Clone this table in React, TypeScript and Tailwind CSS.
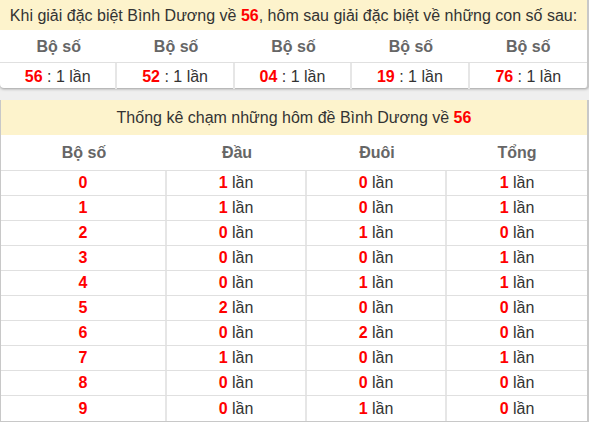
import React from "react";

const top = ["56", "52", "04", "19", "76"];
const rows: [string, string, string, string][] = [
  ["0", "1", "0", "1"],
  ["1", "1", "0", "1"],
  ["2", "0", "1", "0"],
  ["3", "0", "0", "1"],
  ["4", "0", "1", "1"],
  ["5", "2", "0", "0"],
  ["6", "0", "2", "0"],
  ["7", "1", "0", "1"],
  ["8", "0", "0", "0"],
  ["9", "0", "1", "0"],
];

export default function App() {
  return (
    <div
      className="w-[589px] h-[422px] bg-[#efefef] overflow-hidden text-[#333]"
      style={{ fontFamily: '"Liberation Sans", Arial, sans-serif' }}
    >
      <div className="bg-white rounded-b-[4px] shadow-[0_1px_3px_rgba(0,0,0,0.35)] border-r-2 border-[#c8c8c8]">
        <div className="h-[30px] pt-[2px] bg-[#fdf3cc] flex items-center justify-center text-[16px] whitespace-nowrap">
          Khi giải đặc biệt Bình Dương về&nbsp;<b className="text-[#f00]">56</b>, hôm sau giải đặc biệt về những con số sau:
        </div>
        <div className="grid grid-cols-5 h-[33px] pt-[2px] border-b border-[#e0e0e0] items-center">
          {top.map((_, i) => (
            <div key={i} className="text-center font-bold text-[16px] text-[#666]">Bộ số</div>
          ))}
        </div>
        <div className="grid grid-cols-5 h-[25px]">
          {top.map((n, i) => (
            <div
              key={i}
              className={`flex items-center justify-center pt-[2px] text-[16px] ${i < 4 ? "border-r-2 border-[#e6e6e6]" : ""}`}
            >
              <b className="text-[#f00]">{n}</b>&nbsp;: 1 lần
            </div>
          ))}
        </div>
      </div>
      <div className="mt-[12px] bg-white border-l border-r-2 border-[#c8c8c8] border-b-2">
        <div className="h-[35px] bg-[#fdf3cc] flex items-center justify-center text-[16px]">
          Thống kê chạm những hôm đề Bình Dương về&nbsp;<b className="text-[#f00]">56</b>
        </div>
        <div className="grid grid-cols-[166px_140px_140px_1fr] h-[36px] items-center border-b border-[#e0e0e0]">
          {["Bộ số", "Đầu", "Đuôi", "Tổng"].map((h) => (
            <div key={h} className="text-center font-bold text-[16px] text-[#666]">{h}</div>
          ))}
        </div>
        {rows.map((r, idx) => (
          <div
            key={idx}
            className={`grid grid-cols-[166px_140px_140px_1fr] h-[25px] ${idx < 9 ? "border-b border-[#e0e0e0]" : ""}`}
          >
            <div className="flex items-center justify-center border-r-2 border-[#e6e6e6] text-[16px] font-bold text-[#f00]">
              {r[0]}
            </div>
            {[r[1], r[2], r[3]].map((v, j) => (
              <div
                key={j}
                className={`flex items-center justify-center text-[16px] ${j < 2 ? "border-r-2 border-[#e6e6e6]" : ""}`}
              >
                <b className="text-[#f00]">{v}</b>&nbsp;lần
              </div>
            ))}
          </div>
        ))}
      </div>
    </div>
  );
}
